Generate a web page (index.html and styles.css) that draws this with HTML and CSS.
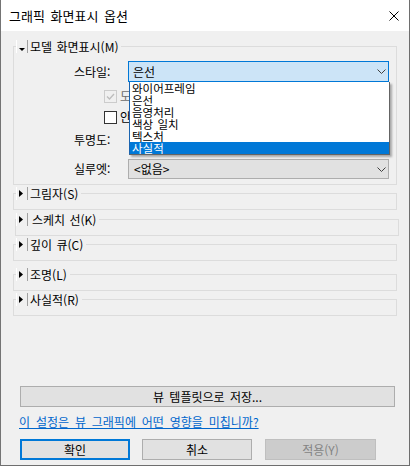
FILE: index.html
```html
<!DOCTYPE html>
<html lang="ko">
<head>
<meta charset="utf-8">
<link rel="stylesheet" href="styles.css">
</head>
<body>
<div class="window">
  <div class="titlebar">
    <span class="title">그래픽 화면표시 옵션</span>
    <svg class="close" width="10" height="10" viewBox="0 0 10 10"><path d="M0.5 0.5L9.5 9.5M9.5 0.5L0.5 9.5" stroke="#000" stroke-width="1" fill="none"/></svg>
  </div>
  <div class="content">
    <fieldset class="group open">
      <legend><span class="toggle"><svg width="6" height="3" viewBox="0 0 6 3"><polygon points="0,0 6,0 3,3" fill="#000"/></svg></span><span class="gl">모델 화면표시(M)</span></legend>
      <div class="rows">
        <div class="row r1">
          <span class="lbl">스타일:</span>
          <div class="combo focus">
            <span class="val">은선</span>
            <svg class="chev" width="9" height="5" viewBox="0 0 9 5"><path d="M0.5 0.5L4.5 4.5L8.5 0.5" stroke="#404040" fill="none"/></svg>
            <ul class="dropdown">
              <li>와이어프레임</li>
              <li>은선</li>
              <li>음영처리</li>
              <li>색상 일치</li>
              <li>텍스처</li>
              <li class="sel">사실적</li>
            </ul>
          </div>
        </div>
        <div class="row r2">
          <span class="chk disabled"><svg width="11" height="11" viewBox="0 0 11 11"><path d="M2 5.5L4.5 8L9 3" stroke="#bdbdbd" stroke-width="1.3" fill="none"/></svg></span>
          <span class="chk-lbl dim">도</span>
        </div>
        <div class="row r3">
          <span class="chk"></span>
          <span class="chk-lbl">안</span>
        </div>
        <div class="row r4">
          <span class="lbl">투명도:</span>
        </div>
        <div class="row r5">
          <span class="lbl">실루엣:</span>
          <div class="combo plain">
            <span class="val">&lt;없음&gt;</span>
            <svg class="chev" width="9" height="5" viewBox="0 0 9 5"><path d="M0.5 0.5L4.5 4.5L8.5 0.5" stroke="#404040" fill="none"/></svg>
          </div>
        </div>
      </div>
    </fieldset>

    <fieldset class="group closed g2">
      <legend><span class="toggle"><svg width="4" height="7" viewBox="0 0 4 7"><polygon points="0,0 4,3.5 0,7" fill="#000"/></svg></span><span class="gl">그림자(S)</span></legend>
    </fieldset>
    <fieldset class="group closed g3 shifted">
      <legend><span class="toggle"><svg width="4" height="7" viewBox="0 0 4 7"><polygon points="0,0 4,3.5 0,7" fill="#000"/></svg></span><span class="gl">스케치 선(K)</span></legend>
    </fieldset>
    <fieldset class="group closed g4">
      <legend><span class="toggle"><svg width="4" height="7" viewBox="0 0 4 7"><polygon points="0,0 4,3.5 0,7" fill="#000"/></svg></span><span class="gl">깊이 큐(C)</span></legend>
    </fieldset>
    <fieldset class="group closed g5">
      <legend><span class="toggle"><svg width="4" height="7" viewBox="0 0 4 7"><polygon points="0,0 4,3.5 0,7" fill="#000"/></svg></span><span class="gl">조명(L)</span></legend>
    </fieldset>
    <fieldset class="group closed g6">
      <legend><span class="toggle"><svg width="4" height="7" viewBox="0 0 4 7"><polygon points="0,0 4,3.5 0,7" fill="#000"/></svg></span><span class="gl">사실적(R)</span></legend>
    </fieldset>

    <div class="footer">
      <button class="btn save">뷰 템플릿으로 저장...</button>
      <a class="link" href="#">이 설정은 뷰 그래픽에 어떤 영향을 미칩니까?</a>
      <div class="actions">
        <button class="btn default">확인</button>
        <button class="btn">취소</button>
        <button class="btn disabled">적용(Y)</button>
      </div>
    </div>
  </div>
</div>
</body>
</html>
```

FILE: styles.css
```css
* { box-sizing: border-box; }

html, body {
  margin: 0;
  padding: 0;
}

body {
  width: 410px;
  height: 466px;
  overflow: hidden;
  font-family: "Noto Sans CJK KR", "Noto Sans", sans-serif;
  font-size: 12px;
  color: #000;
  background: #ffffff;
}

.window {
  width: 410px;
  height: 466px;
  border-left: 1px solid #747474;
  border-right: 1px solid #6e6e6e;
  border-bottom: 1px solid #6e6e6e;
  display: flex;
  flex-direction: column;
  background: #f0f0f0;
}

.titlebar {
  height: 31px;
  flex: none;
  background: #ffffff;
  display: flex;
  align-items: center;
  padding-left: 8px;
}

.title {
  font-size: 13px;
  line-height: 16px;
  word-spacing: 2px;
}

.close {
  margin-left: auto;
  margin-right: 10px;
  display: block;
}

.content {
  flex: 1;
  display: flex;
  flex-direction: column;
  padding: 9px 12px 5px 12px;
}

/* group boxes */
.group {
  margin: 0;
  padding: 0;
  border: 1px solid #dcdcdc;
  min-width: 0;
}

.group legend {
  padding: 0 3px 0 0;
  margin-left: 2px;
  height: 13px;
  display: flex;
  align-items: stretch;
}

.toggle {
  width: 12px;
  height: 13px;
  border-left: 1px solid #ffffff;
  border-right: 1px solid #a0a0a0;
  display: flex;
  align-items: center;
  justify-content: center;
}

.open .toggle svg { margin-top: 6px; margin-left: -1px; }
.closed .toggle svg { margin-left: -2px; }

.gl {
  padding-left: 2px;
  line-height: 13px;
  white-space: nowrap;
  word-spacing: 1px;
}

.closed { padding-bottom: 9px; }
.g2 { margin-top: 2px; }
.g3 { margin-top: 3px; }
.g4 { margin-top: 2px; }
.g5 { margin-top: 7px; }
.g6 { margin-top: 2px; }

.shifted {
  margin-left: 2px;
  margin-right: -2px;
}
.shifted legend { margin-left: 0; }
.shifted .gl { padding-left: 4px; }

.rows {
  padding: 8px 0 5px 60px;
  display: flex;
  flex-direction: column;
}

.row {
  display: flex;
  align-items: center;
}

.r1 { height: 21px; }
.r2 { height: 18px; margin-top: 5px; padding-left: 30px; }
.r3 { height: 18px; margin-top: 3px; padding-left: 30px; }
.r4 { height: 20px; margin-top: 4px; }
.r5 { height: 20px; margin-top: 9px; }

.lbl {
  width: 54px;
  flex: none;
  line-height: 14px;
  white-space: nowrap;
}

/* combos */
.combo {
  position: relative;
  width: 261px;
  display: flex;
  align-items: center;
  padding-left: 4px;
}

.combo.focus {
  height: 21px;
  background: #cce4f7;
  border: 1px solid #0078d7;
}

.combo.plain {
  height: 20px;
  background: #e1e1e1;
  border: 1px solid #adadad;
  padding-left: 5px;
}

.val { line-height: 14px; }

.chev {
  margin-left: auto;
  margin-right: 2px;
  display: block;
}

.dropdown {
  position: absolute;
  z-index: 5;
  left: 0;
  top: calc(100% + 1px);
  width: 261px;
  margin: 0;
  padding: 0;
  list-style: none;
  background: #ffffff;
  border: 1px solid #646464;
  border-left-color: #1a64b0;
  border-top: none;
  box-shadow: 2px 2px 2px rgba(0, 0, 0, 0.3);
  overflow: hidden;
}

.dropdown li {
  height: 12px;
  font-size: 11.5px;
  line-height: 12px;
  padding-left: 2px;
  white-space: nowrap;
  word-spacing: 1px;
}

.dropdown li.sel {
  background: #0078d7;
  color: #ffffff;
}

/* checkboxes */
.chk {
  width: 13px;
  height: 13px;
  flex: none;
  border: 1px solid #333333;
  background: #ffffff;
  display: flex;
  align-items: center;
  justify-content: center;
}

.chk.disabled {
  border-color: #cccccc;
  background: #f0f0f0;
}

.chk-lbl {
  margin-left: 3px;
  line-height: 14px;
  white-space: nowrap;
}

.chk-lbl.dim { color: #6d6d6d; }

/* footer */
.footer {
  margin-top: auto;
  display: flex;
  flex-direction: column;
}

.btn {
  font-family: inherit;
  font-size: 12px;
  color: #000;
  height: 21px;
  padding: 0;
  margin: 0;
  background: #e1e1e1;
  border: 1px solid #adadad;
  line-height: 14px;
  word-spacing: 2px;
}

.save {
  margin-left: 7px;
  width: 375px;
}

.link {
  margin-top: 8px;
  margin-left: 6px;
  line-height: 13px;
  color: #0066cc;
  text-decoration: underline;
  word-spacing: 2.5px;
  align-self: flex-start;
}

.actions {
  margin-top: 11px;
  margin-left: 7px;
  display: flex;
  gap: 12px;
}

.actions .btn { width: 110px; }

.btn.default {
  border: 2px solid #0078d7;
}

.btn.disabled {
  width: 111px;
  margin-left: 1px;
  background: #cccccc;
  border-color: #bfbfbf;
  color: #838383;
}
```
